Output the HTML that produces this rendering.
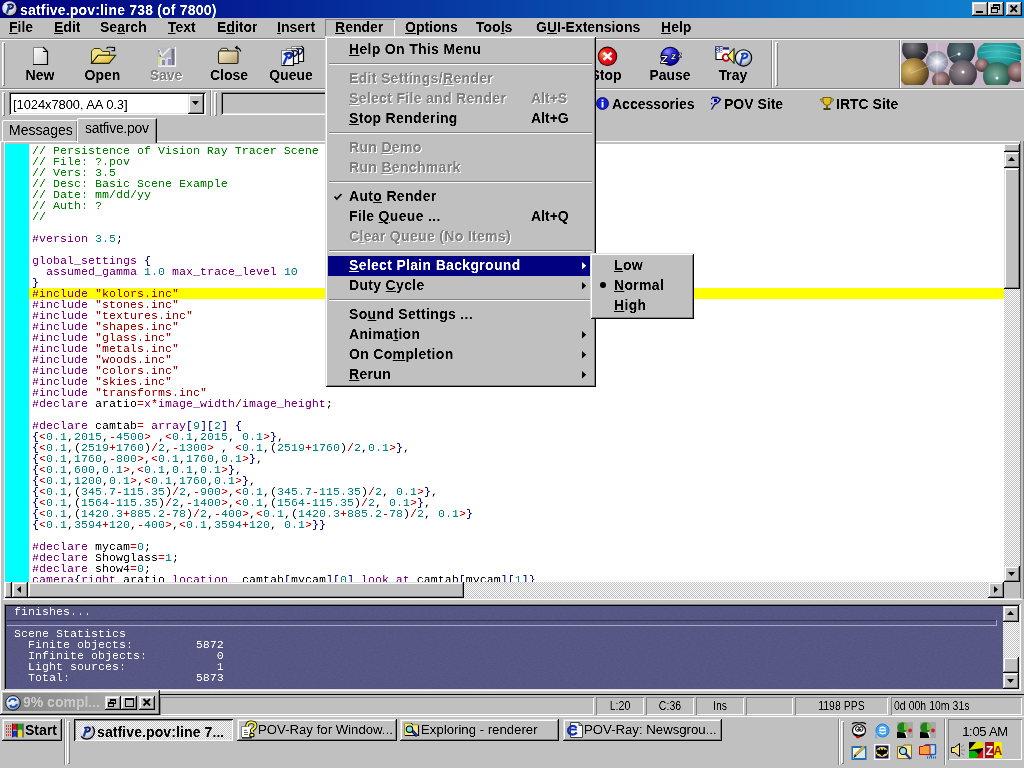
<!DOCTYPE html><html><head><meta charset="utf-8"><style>
*{box-sizing:border-box}
html,body{margin:0;padding:0}
body{width:1024px;height:768px;overflow:hidden;background:#c0c0c0;position:relative;font-family:"Liberation Sans",sans-serif;color:#000}
.a{position:absolute}
.b{font-weight:bold}
.raised{background:#c0c0c0;box-shadow:inset -1px -1px #000,inset 1px 1px #dfdfdf,inset -2px -2px #808080,inset 2px 2px #fff}
.raised2{background:#c0c0c0;box-shadow:inset -1px -1px #000,inset 1px 1px #fff,inset -2px -2px #808080}
.sunk{box-shadow:inset 1px 1px #808080,inset -1px -1px #fff,inset 2px 2px #000,inset -2px -2px #dfdfdf}
.tr{box-shadow:inset -1px -1px #808080,inset 1px 1px #fff}
.ts{box-shadow:inset 1px 1px #808080,inset -1px -1px #fff}
.dither{background-color:#fff;background-image:linear-gradient(45deg,#c0c0c0 25%,transparent 25%,transparent 75%,#c0c0c0 75%),linear-gradient(45deg,#c0c0c0 25%,transparent 25%,transparent 75%,#c0c0c0 75%);background-size:2px 2px;background-position:0 0,1px 1px}
.t{white-space:nowrap;filter:url(#cr)}
.m14b{font-size:14px;font-weight:bold}
.code{font-family:"Liberation Mono",monospace;font-size:11.67px;line-height:11px;white-space:pre;filter:url(#cr)}
u{text-decoration:underline;text-decoration-thickness:1px;text-underline-offset:1px}
</style></head><body>
<svg width="0" height="0" style="position:absolute"><filter id="cr" x="0" y="0" width="100%" height="100%"><feComponentTransfer><feFuncA type="table" tableValues="0 0 .5 1 1"/></feComponentTransfer></filter><filter id="cr2" x="0" y="0" width="100%" height="100%"><feComponentTransfer><feFuncA type="table" tableValues="0 .3 1 1 1"/></feComponentTransfer></filter></svg>
<div class="a " style="left:0px;top:0px;width:1024px;height:18px;background:linear-gradient(90deg,#000080,#1084d0)"></div>
<svg class="a" style="left:1px;top:0px" width="17" height="17" viewBox="0 0 17 17">
<defs><radialGradient id="pb" cx="40%" cy="40%" r="65%"><stop offset="0" stop-color="#ffffff"/><stop offset=".55" stop-color="#dcdce8"/><stop offset="1" stop-color="#a8a8c0"/></radialGradient></defs>
<circle cx="8.5" cy="8.5" r="7.3" fill="url(#pb)"/>
<path d="M3.2 13.5 A7.3 7.3 0 0 0 14.5 3.5" fill="none" stroke="#000" stroke-width="1.3"/>
<path d="M5.8 13.5 L8.3 5.5" stroke="#1040a0" stroke-width="2.3"/>
<path d="M6.3 5 Q11.5 3.5 12 5.8 Q12 8.8 8 8.8" fill="none" stroke="#101850" stroke-width="1.9"/>
<path d="M7.5 6 L9.5 6.5" stroke="#2060e0" stroke-width="1.2"/>
</svg>
<div class="a t b" style="left:20px;top:1px;font-size:14px;line-height:18px;color:#fff;letter-spacing:0.2px">satfive.pov:line 738 (of 7800)</div>
<div class="a raised" style="left:972px;top:2px;width:16px;height:14px;"></div>
<div class="a raised" style="left:988px;top:2px;width:16px;height:14px;"></div>
<div class="a raised" style="left:1006px;top:2px;width:16px;height:14px;"></div>
<div class="a " style="left:976px;top:11px;width:7px;height:2px;background:#000"></div>
<div class="a " style="left:993px;top:4px;width:7px;height:6px;border:1px solid #000;border-top-width:2px;background:#c0c0c0"></div>
<div class="a " style="left:991px;top:7px;width:7px;height:6px;border:1px solid #000;border-top-width:2px;background:#c0c0c0"></div>
<svg class="a" style="left:1009px;top:4px" width="10" height="9"><path d="M1.5 1.5 L8 8 M8 1.5 L1.5 8" stroke="#000" stroke-width="1.8"/></svg>
<div class="a " style="left:0px;top:38px;width:1024px;height:1px;background:#808080"></div>
<div class="a " style="left:0px;top:39px;width:1024px;height:1px;background:#fff"></div>
<div class="a " style="left:325px;top:19px;width:70px;height:18px;box-shadow:inset 1px 1px #808080,inset -1px -1px #fff"></div>
<div class="a t b" style="left:9px;top:18px;font-size:14px;line-height:18px"><u>F</u>ile</div>
<div class="a t b" style="left:54px;top:18px;font-size:14px;line-height:18px"><u>E</u>dit</div>
<div class="a t b" style="left:100px;top:18px;font-size:14px;line-height:18px">Se<u>a</u>rch</div>
<div class="a t b" style="left:168px;top:18px;font-size:14px;line-height:18px"><u>T</u>ext</div>
<div class="a t b" style="left:217px;top:18px;font-size:14px;line-height:18px">E<u>d</u>itor</div>
<div class="a t b" style="left:277px;top:18px;font-size:14px;line-height:18px"><u>I</u>nsert</div>
<div class="a t b" style="left:335px;top:18px;font-size:14px;line-height:18px"><u>R</u>ender</div>
<div class="a t b" style="left:405px;top:18px;font-size:14px;line-height:18px"><u>O</u>ptions</div>
<div class="a t b" style="left:476px;top:18px;font-size:14px;line-height:18px">Too<u>l</u>s</div>
<div class="a t b" style="left:536px;top:18px;font-size:14px;line-height:18px">G<u>U</u>I-Extensions</div>
<div class="a t b" style="left:661px;top:18px;font-size:14px;line-height:18px"><u>H</u>elp</div>
<div class="a " style="left:0px;top:88px;width:1024px;height:1px;background:#808080"></div>
<div class="a " style="left:0px;top:89px;width:1024px;height:1px;background:#fff"></div>
<div class="a " style="left:2px;top:42px;width:3px;height:44px;background:#dfdfdf;box-shadow:inset 1px 1px #fff,inset -1px -1px #808080"></div>
<div class="a " style="left:2px;top:92px;width:3px;height:24px;background:#dfdfdf;box-shadow:inset 1px 1px #fff,inset -1px -1px #808080"></div>
<div class="a " style="left:771px;top:40px;width:1px;height:48px;background:#808080"></div>
<div class="a " style="left:772px;top:40px;width:1px;height:48px;background:#fff"></div>
<div class="a " style="left:775px;top:42px;width:3px;height:44px;background:#dfdfdf;box-shadow:inset 1px 1px #fff,inset -1px -1px #808080"></div>
<div class="a " style="left:899px;top:40px;width:1px;height:48px;background:#808080"></div>
<div class="a " style="left:900px;top:40px;width:1px;height:48px;background:#fff"></div>
<div class="a " style="left:901px;top:43px;width:120px;height:42px;background:#c0c0c0"></div>
<svg class="a" style="left:901px;top:43px" width="120" height="42" viewBox="0 0 120 42">
<defs>
<radialGradient id="m1" cx="40%" cy="40%" r="60%"><stop offset="0" stop-color="#808080"/><stop offset=".6" stop-color="#404048"/><stop offset="1" stop-color="#202028"/></radialGradient>
<radialGradient id="m2" cx="35%" cy="40%" r="65%"><stop offset="0" stop-color="#e0c070"/><stop offset=".6" stop-color="#9a7838"/><stop offset="1" stop-color="#504020"/></radialGradient>
<radialGradient id="m3" cx="45%" cy="45%" r="60%"><stop offset="0" stop-color="#607880"/><stop offset=".7" stop-color="#384850"/><stop offset="1" stop-color="#202830"/></radialGradient>
<radialGradient id="m4" cx="45%" cy="45%" r="60%"><stop offset="0" stop-color="#40c0c0"/><stop offset=".7" stop-color="#209090"/><stop offset="1" stop-color="#105858"/></radialGradient>
<radialGradient id="m5" cx="45%" cy="40%" r="60%"><stop offset="0" stop-color="#c0a0a0"/><stop offset=".6" stop-color="#806060"/><stop offset="1" stop-color="#403030"/></radialGradient>
<radialGradient id="m6" cx="50%" cy="50%" r="55%"><stop offset="0" stop-color="#ffffff"/><stop offset=".4" stop-color="#c8c8d8"/><stop offset="1" stop-color="#707888"/></radialGradient>
<radialGradient id="m7" cx="45%" cy="40%" r="60%"><stop offset="0" stop-color="#a09098"/><stop offset=".6" stop-color="#686068"/><stop offset="1" stop-color="#383038"/></radialGradient>
<radialGradient id="m8" cx="45%" cy="45%" r="60%"><stop offset="0" stop-color="#80b0a0"/><stop offset=".6" stop-color="#407868"/><stop offset="1" stop-color="#204038"/></radialGradient>
</defs>
<rect width="120" height="42" fill="#c8b4c8"/>
<circle cx="14" cy="6" r="13" fill="url(#m1)"/>
<circle cx="13" cy="30" r="15" fill="url(#m2)"/>
<circle cx="60" cy="8" r="14" fill="url(#m3)"/>
<ellipse cx="99" cy="11" rx="23" ry="15" fill="url(#m4)"/>
<path d="M80 4 Q100 0 120 6 M78 10 Q100 5 120 12 M80 16 Q100 11 120 18" stroke="#50d0d0" stroke-width="1" fill="none" opacity=".6"/>
<circle cx="62" cy="31" r="14" fill="url(#m7)"/>
<circle cx="81" cy="22" r="7" fill="url(#m5)"/>
<circle cx="96" cy="33" r="14" fill="url(#m8)"/>
<circle cx="40" cy="37" r="9" fill="url(#m5)"/>
<circle cx="116" cy="29" r="10" fill="url(#m5)"/>
<circle cx="36" cy="19" r="11" fill="url(#m6)"/>
<path d="M36 0 V42 M10 30 L60 10 M20 8 L52 28" stroke="#fff" stroke-width=".6" opacity=".5"/>
<circle cx="58" cy="11" r="1.5" fill="#e0ffff"/><circle cx="62" cy="29" r="1.5" fill="#fff"/><circle cx="96" cy="35" r="1.5" fill="#e0ffff"/>
</svg>
<div class="a t b" style="left:0px;top:67px;width:80px;text-align:center;font-size:14px;line-height:16px">New</div>
<div class="a t b" style="left:62.5px;top:67px;width:80px;text-align:center;font-size:14px;line-height:16px">Open</div>
<div class="a t b" style="left:127px;top:68px;width:80px;text-align:center;font-size:14px;line-height:16px;color:#fff">Save</div>
<div class="a t b" style="left:126px;top:67px;width:80px;text-align:center;font-size:14px;line-height:16px;color:#808080">Save</div>
<div class="a t b" style="left:189px;top:67px;width:80px;text-align:center;font-size:14px;line-height:16px">Close</div>
<div class="a t b" style="left:251px;top:67px;width:80px;text-align:center;font-size:14px;line-height:16px">Queue</div>
<div class="a t b" style="left:566px;top:67px;width:80px;text-align:center;font-size:14px;line-height:16px">Stop</div>
<div class="a t b" style="left:630px;top:67px;width:80px;text-align:center;font-size:14px;line-height:16px">Pause</div>
<div class="a t b" style="left:693px;top:67px;width:80px;text-align:center;font-size:14px;line-height:16px">Tray</div>
<svg class="a" style="left:32px;top:46px" width="18" height="20" viewBox="0 0 18 20">
<defs><linearGradient id="pg" x1="0" y1="0" x2="1" y2="1"><stop offset="0" stop-color="#ffffff"/><stop offset="1" stop-color="#c8c8c8"/></linearGradient></defs>
<path d="M1.5 1.5 H11 L15.5 6 V18.5 H1.5 Z" fill="url(#pg)"/>
<path d="M1.5 18.5 V1.5 H11" fill="none" stroke="#808080" stroke-width="1"/>
<path d="M11 1 L15.5 5.5 V18.5 H1" fill="none" stroke="#000" stroke-width="1.2"/>
<path d="M11 5.5 H15.5" fill="none" stroke="#000" stroke-width="1"/>
</svg>
<svg class="a" style="left:86px;top:40px" width="34" height="26" viewBox="0 0 34 26">
<defs><linearGradient id="fo" x1="0" y1="0" x2="1" y2="1"><stop offset="0" stop-color="#fff8b0"/><stop offset=".6" stop-color="#e8c850"/><stop offset="1" stop-color="#d8a030"/></linearGradient></defs>
<path d="M5.5 23.4 V11 L8 8.5 H14 L16.5 11.5 H23.5 V15.3 H12Z" fill="#f0e088" stroke="#383800" stroke-width="1"/>
<path d="M5.5 23.4 L12 15.3 H29.6 L23 23.4 Z" fill="url(#fo)" stroke="#202000" stroke-width="1.1"/>
<path d="M20.5 8.5 L22 7.2 H25 L28.6 7.6 V10.8 H25.5" fill="none" stroke="#000" stroke-width="1.1"/>
</svg>
<svg class="a" style="left:150px;top:40px" width="36" height="28" viewBox="0 0 36 28">
<rect x="7.5" y="7.5" width="17" height="18" fill="#b8b8c0"/>
<path d="M9 9 L12 16 L20 8" fill="none" stroke="#f0f0f0" stroke-width="1.5"/>
<path d="M9 10 V12 M10 15 L11 17" stroke="#606068" stroke-width="1"/>
<rect x="8" y="17" width="4" height="8" fill="#d8d890"/>
<path d="M11 25 V19 H15 V25 M17 25 V18 H21 V25" fill="none" stroke="#f0f0f0" stroke-width="1"/>
<rect x="12" y="20" width="3" height="5" fill="#8888b0"/><rect x="18" y="19" width="3" height="6" fill="#9090c8"/>
<rect x="21.5" y="9" width="3" height="16" fill="#707088"/>
<path d="M25.5 7 V26.2 H8" fill="none" stroke="#fff" stroke-width="1.2"/>
</svg>
<svg class="a" style="left:212px;top:40px" width="36" height="28" viewBox="0 0 36 28">
<defs><linearGradient id="fc" x1="0" y1="0" x2="1" y2="1"><stop offset="0" stop-color="#f8f0d0"/><stop offset=".5" stop-color="#d8c8a0"/><stop offset="1" stop-color="#a89868"/></linearGradient></defs>
<path d="M8 11 L9.5 8.3 H15 L16.5 11Z" fill="#f0e8c8" stroke="#303018" stroke-width="1"/>
<rect x="6.5" y="11" width="19.5" height="12.5" rx="1.2" fill="url(#fc)" stroke="#202010" stroke-width="1.1"/>
<path d="M25.5 6 L23.5 7.6 L25.5 9.4 M24 7.6 Q27.5 7.6 28.8 11.5" fill="none" stroke="#000" stroke-width="1.1"/>
</svg>
<svg class="a" style="left:276px;top:40px" width="36" height="28" viewBox="0 0 36 28"><rect x="15.5" y="6.5" width="12" height="15" fill="#f4f4f4"/><path d="M15.5 21.5 V6.5 H25.5" fill="none" stroke="#808080" stroke-width="1"/><path d="M25.5 6.0 L27.5 8.0 V21.5 H15.5" fill="none" stroke="#000" stroke-width="1.2"/><path d="M17.5 10.5 Q22.5 7.0 26.5 9.5 Q26.5 13.5 22.5 14.5" fill="none" stroke="#101850" stroke-width="1.4"/><rect x="10.5" y="8.5" width="12" height="15" fill="#f4f4f4"/><path d="M10.5 23.5 V8.5 H20.5" fill="none" stroke="#808080" stroke-width="1"/><path d="M20.5 8.0 L22.5 10.0 V23.5 H10.5" fill="none" stroke="#000" stroke-width="1.2"/><path d="M12.5 12.5 Q17.5 9.0 21.5 11.5 Q21.5 15.5 17.5 16.5" fill="none" stroke="#101850" stroke-width="1.4"/><rect x="5.5" y="10.5" width="12" height="15" fill="#f4f4f4"/><path d="M5.5 25.5 V10.5 H15.5" fill="none" stroke="#808080" stroke-width="1"/><path d="M15.5 10.0 L17.5 12.0 V25.5 H5.5" fill="none" stroke="#000" stroke-width="1.2"/><path d="M7.5 14.5 Q12.5 11.0 16.5 13.5 Q16.5 17.5 12.5 18.5" fill="none" stroke="#101850" stroke-width="1.4"/>
<path d="M7.5 24.5 L11.5 15.5" stroke="#1030c0" stroke-width="2.2"/>
<path d="M9 15.5 Q12 12.5 15 14 Q16 17 12 18.5" fill="none" stroke="#1030c0" stroke-width="2"/>
</svg>
<svg class="a" style="left:597px;top:46px" width="22" height="21" viewBox="0 0 22 21">
<defs><radialGradient id="st" cx="25%" cy="40%" r="75%"><stop offset="0" stop-color="#ff9040"/><stop offset=".35" stop-color="#f02020"/><stop offset="1" stop-color="#d00010"/></radialGradient></defs>
<circle cx="10.5" cy="10.3" r="9.2" fill="url(#st)" stroke="#300000" stroke-width="1.1"/>
<path d="M6.5 6.8 L14.5 13.8 M14.5 6.8 L6.5 13.8" stroke="#fff" stroke-width="2.6"/>
</svg>
<svg class="a" style="left:659px;top:46px" width="26" height="21" viewBox="0 0 26 21">
<defs><radialGradient id="ps" cx="35%" cy="25%" r="75%"><stop offset="0" stop-color="#9090ff"/><stop offset=".4" stop-color="#3030e0"/><stop offset="1" stop-color="#0000a0"/></radialGradient></defs>
<circle cx="11.2" cy="10.3" r="9.1" fill="url(#ps)" stroke="#000040" stroke-width="1.1"/>
<path d="M2 9.5 H9 V11 L4.5 15.5 H9 V17.5 H1.5 V16 L6 11.5 H2Z" fill="#fff" stroke="#000" stroke-width=".9"/>
<path d="M12.5 8 H17 V9 L14.5 12 H17 V13.5 H12 V12.5 L14.5 9.5 H12.5Z" fill="#fff" stroke="#000" stroke-width=".7"/>
<path d="M19.5 7 H22.5 V8 L20.8 10.5 H22.5 V11.5 H19.2 V10.5 L21 8 H19.5Z" fill="#fff" stroke="#000" stroke-width=".6"/>
</svg>
<svg class="a" style="left:710px;top:42px" width="44" height="26" viewBox="0 0 44 26">
<rect x="6" y="7" width="13" height="10.5" fill="#fff"/>
<path d="M6 7 V17.5 H19" fill="none" stroke="#000" stroke-width="1.1"/>
<rect x="5.2" y="4.3" width="7.3" height="6" fill="#101050"/>
<rect x="12.5" y="5.3" width="6.5" height="2.4" fill="#202080"/>
<text x="5.6" y="9.9" font-family="Liberation Sans" font-weight="bold" font-size="6.5" fill="#fff">38</text>
<circle cx="16" cy="15.5" r="3.3" fill="#f0f0f0" stroke="#c00000" stroke-width="1.7"/>
<path d="M17.5 14 L24 6.5 V21.5 Z" fill="#f0f060" stroke="#000" stroke-width="1"/>
<defs><radialGradient id="tp" cx="40%" cy="35%" r="65%"><stop offset="0" stop-color="#ffffff"/><stop offset=".6" stop-color="#d0d8e8"/><stop offset="1" stop-color="#8890a8"/></radialGradient></defs>
<circle cx="33.5" cy="15.9" r="8.2" fill="url(#tp)" stroke="#000" stroke-width="1.1"/>
<path d="M30 23 L33 12.5" stroke="#1040b0" stroke-width="2"/>
<path d="M31 12.2 Q36.5 10.5 37.5 13 Q37 16.5 32.5 16.5" fill="none" stroke="#1040b0" stroke-width="1.9"/>
</svg>
<div class="a " style="left:9px;top:92px;width:197px;height:23px;background:#fff;box-shadow:inset 1px 1px #808080,inset -1px -1px #fff,inset 2px 2px #000,inset -2px -2px #dfdfdf"></div>
<div class="a t " style="left:13px;top:95px;font-size:13px;line-height:19px;letter-spacing:-0.1px">[1024x7800, AA 0.3]</div>
<div class="a raised" style="left:188px;top:94px;width:16px;height:20px;"></div>
<svg class="a" style="left:192px;top:101px" width="8" height="5"><path d="M0 0 H7 L3.5 4Z" fill="#000"/></svg>
<div class="a " style="left:210px;top:90px;width:1px;height:26px;background:#808080"></div>
<div class="a " style="left:211px;top:90px;width:1px;height:26px;background:#fff"></div>
<div class="a " style="left:214px;top:92px;width:3px;height:24px;background:#dfdfdf;box-shadow:inset 1px 1px #fff,inset -1px -1px #808080"></div>
<div class="a " style="left:221px;top:92px;width:110px;height:23px;background:#c0c0c0;box-shadow:inset 1px 1px #808080,inset -1px -1px #fff,inset 2px 2px #000,inset -2px -2px #dfdfdf"></div>
<svg class="a" style="left:596px;top:97px" width="13" height="13" viewBox="0 0 13 13"><circle cx="6.5" cy="6.5" r="6" fill="#1020d0" stroke="#000050" stroke-width=".8"/><rect x="5.5" y="5" width="2" height="5.5" fill="#fff"/><rect x="5.5" y="2.5" width="2" height="1.7" fill="#fff"/></svg>
<div class="a t b" style="left:612px;top:96px;font-size:14px;line-height:17px">Accessories</div>
<svg class="a" style="left:704px;top:92px" width="20" height="20" viewBox="0 0 20 20"><path d="M9 6.5 Q12 10 9.5 12.5 L8 17" fill="none" stroke="#c8c8ff" stroke-width="2"/><rect x="10" y="7" width="3" height="3" fill="#0000c0"/><path d="M8 5.5 H13.5 L16.5 7.5 L14 10.5 L10.5 12.5 L7.5 17.5" fill="none" stroke="#000060" stroke-width="1.3"/><rect x="7" y="6" width="1.3" height="1.3" fill="#000060"/><rect x="7" y="11" width="1.3" height="1.3" fill="#000060"/></svg>
<div class="a t b" style="left:724px;top:96px;font-size:14px;line-height:17px">POV Site</div>
<svg class="a" style="left:819px;top:96px" width="16" height="15" viewBox="0 0 16 15"><path d="M4 1.5 H12 V5 Q12 9 8 9.5 Q4 9 4 5Z" fill="#e0c020" stroke="#604000" stroke-width=".8"/><path d="M4 3 H1.5 Q1.5 6 4.5 6.5 M12 3 H14.5 Q14.5 6 11.5 6.5" fill="none" stroke="#806000" stroke-width=".9"/><rect x="7" y="9.5" width="2" height="2.5" fill="#806000"/><rect x="4.5" y="12" width="7" height="2" fill="#404000"/></svg>
<div class="a t b" style="left:836px;top:96px;font-size:14px;line-height:17px">IRTC Site</div>
<div class="a " style="left:157px;top:141px;width:863px;height:1px;background:#fff"></div>
<div class="a" style="left:2px;top:120px;width:75px;height:21px;background:#c0c0c0;border-top:1px solid #fff;border-left:1px solid #fff;border-top-left-radius:2px;box-shadow:inset -1px 0 #808080"></div>
<div class="a t " style="left:9px;top:122px;font-size:14px;line-height:16px;letter-spacing:0px">Messages</div>
<div class="a" style="left:77px;top:118px;width:80px;height:25px;background:#c0c0c0;border-top:1px solid #fff;border-left:1px solid #fff;border-right:1px solid #000;border-top-left-radius:2px;box-shadow:inset -1px 0 #808080"></div>
<div class="a t " style="left:85px;top:120px;font-size:14px;line-height:16px;letter-spacing:-0.3px">satfive.pov</div>
<div class="a " style="left:2px;top:141px;width:1px;height:1px;background:#fff"></div>
<div class="a " style="left:0px;top:141px;width:77px;height:1px;background:#fff"></div>
<div class="a " style="left:157px;top:141px;width:863px;height:1px;background:#fff"></div>
<div class="a " style="left:0px;top:141px;width:1px;height:550px;background:#fff"></div>
<div class="a " style="left:5px;top:144px;width:999px;height:438px;background:#fff"></div>
<div class="a " style="left:5px;top:144px;width:24px;height:438px;background:#00ffff"></div>
<div class="a " style="left:29px;top:288px;width:975px;height:11px;background:#ffff00"></div>
<div class="a " style="left:1020px;top:141px;width:1px;height:458px;background:#808080"></div>
<div class="a " style="left:1023px;top:141px;width:1px;height:458px;background:#808080"></div>
<div class="a dither" style="left:1004px;top:144px;width:16px;height:438px;"></div>
<div class="a raised2" style="left:1004px;top:144px;width:16px;height:8px;"></div>
<div class="a raised" style="left:1004px;top:152px;width:16px;height:16px;"></div>
<svg class="a" style="left:1008px;top:157px" width="8" height="5"><path d="M3.5 0 L7 4 H0Z" fill="#000"/></svg>
<div class="a raised" style="left:1004px;top:168px;width:16px;height:121px;"></div>
<div class="a raised" style="left:1004px;top:566px;width:16px;height:16px;"></div>
<svg class="a" style="left:1008px;top:572px" width="8" height="5"><path d="M0 0 H7 L3.5 4Z" fill="#000"/></svg>
<div class="a dither" style="left:5px;top:582px;width:999px;height:16px;"></div>
<div class="a raised2" style="left:5px;top:582px;width:7px;height:16px;"></div>
<div class="a raised" style="left:12px;top:582px;width:16px;height:16px;"></div>
<svg class="a" style="left:17px;top:586px" width="5" height="8"><path d="M4 0 V7 L0 3.5Z" fill="#000"/></svg>
<div class="a raised" style="left:28px;top:582px;width:436px;height:16px;"></div>
<div class="a raised" style="left:988px;top:582px;width:16px;height:16px;"></div>
<svg class="a" style="left:994px;top:586px" width="5" height="8"><path d="M0 0 V7 L4 3.5Z" fill="#000"/></svg>
<div class="a " style="left:1004px;top:582px;width:16px;height:16px;background:#c0c0c0"></div>
<div class="a " style="left:4px;top:598px;width:1017px;height:1px;background:#dfdfdf"></div>
<div class="a " style="left:3px;top:599px;width:1019px;height:1px;background:#fff"></div>
<div class="a" style="left:29px;top:144px;width:975px;height:438px;overflow:hidden"><div class="a code" style="left:3px;top:2px"><span style="color:#008000">// Persistence of Vision Ray Tracer Scene</span>
<span style="color:#008000">// File: ?.pov</span>
<span style="color:#008000">// Vers: 3.5</span>
<span style="color:#008000">// Desc: Basic Scene Example</span>
<span style="color:#008000">// Date: mm/dd/yy</span>
<span style="color:#008000">// Auth: ?</span>
<span style="color:#008000">//</span>

<span style="color:#800080">#version</span><span style="color:#000000"> </span><span style="color:#008080">3.5</span><span style="color:#000000">;</span>

<span style="color:#800080">global_settings</span><span style="color:#000000"> </span><span style="color:#000080">{</span>
<span style="color:#000000"> </span><span style="color:#000000"> </span><span style="color:#800080">assumed_gamma</span><span style="color:#000000"> </span><span style="color:#008080">1.0</span><span style="color:#000000"> </span><span style="color:#800080">max_trace_level</span><span style="color:#000000"> </span><span style="color:#008080">10</span>
<span style="color:#000080">}</span>
<span style="color:#800080">#include</span><span style="color:#000000"> </span><span style="color:#a00000">&quot;kolors.inc&quot;</span>
<span style="color:#800080">#include</span><span style="color:#000000"> </span><span style="color:#a00000">&quot;stones.inc&quot;</span>
<span style="color:#800080">#include</span><span style="color:#000000"> </span><span style="color:#a00000">&quot;textures.inc&quot;</span>
<span style="color:#800080">#include</span><span style="color:#000000"> </span><span style="color:#a00000">&quot;shapes.inc&quot;</span>
<span style="color:#800080">#include</span><span style="color:#000000"> </span><span style="color:#a00000">&quot;glass.inc&quot;</span>
<span style="color:#800080">#include</span><span style="color:#000000"> </span><span style="color:#a00000">&quot;metals.inc&quot;</span>
<span style="color:#800080">#include</span><span style="color:#000000"> </span><span style="color:#a00000">&quot;woods.inc&quot;</span>
<span style="color:#800080">#include</span><span style="color:#000000"> </span><span style="color:#a00000">&quot;colors.inc&quot;</span>
<span style="color:#800080">#include</span><span style="color:#000000"> </span><span style="color:#a00000">&quot;skies.inc&quot;</span>
<span style="color:#800080">#include</span><span style="color:#000000"> </span><span style="color:#a00000">&quot;transforms.inc&quot;</span>
<span style="color:#800080">#declare</span><span style="color:#000000"> </span><span style="color:#000000">aratio</span><span style="color:#c00000">=</span><span style="color:#800080">x</span><span style="color:#c00000">*</span><span style="color:#800080">image_width</span><span style="color:#c00000">/</span><span style="color:#800080">image_height</span><span style="color:#000000">;</span>

<span style="color:#800080">#declare</span><span style="color:#000000"> </span><span style="color:#000000">camtab</span><span style="color:#c00000">=</span><span style="color:#000000"> </span><span style="color:#800080">array</span><span style="color:#000080">[</span><span style="color:#008080">9</span><span style="color:#000080">]</span><span style="color:#000080">[</span><span style="color:#008080">2</span><span style="color:#000080">]</span><span style="color:#000000"> </span><span style="color:#000080">{</span>
<span style="color:#000080">{</span><span style="color:#c00000">&lt;</span><span style="color:#008080">0.1</span><span style="color:#000000">,</span><span style="color:#008080">2015</span><span style="color:#000000">,</span><span style="color:#c00000">-</span><span style="color:#008080">4500</span><span style="color:#c00000">&gt;</span><span style="color:#000000"> </span><span style="color:#000000">,</span><span style="color:#c00000">&lt;</span><span style="color:#008080">0.1</span><span style="color:#000000">,</span><span style="color:#008080">2015</span><span style="color:#000000">,</span><span style="color:#000000"> </span><span style="color:#008080">0.1</span><span style="color:#c00000">&gt;</span><span style="color:#000080">}</span><span style="color:#000000">,</span>
<span style="color:#000080">{</span><span style="color:#c00000">&lt;</span><span style="color:#008080">0.1</span><span style="color:#000000">,</span><span style="color:#101010">(</span><span style="color:#008080">2519</span><span style="color:#c00000">+</span><span style="color:#008080">1760</span><span style="color:#101010">)</span><span style="color:#c00000">/</span><span style="color:#008080">2</span><span style="color:#000000">,</span><span style="color:#c00000">-</span><span style="color:#008080">1300</span><span style="color:#c00000">&gt;</span><span style="color:#000000"> </span><span style="color:#000000">,</span><span style="color:#000000"> </span><span style="color:#c00000">&lt;</span><span style="color:#008080">0.1</span><span style="color:#000000">,</span><span style="color:#101010">(</span><span style="color:#008080">2519</span><span style="color:#c00000">+</span><span style="color:#008080">1760</span><span style="color:#101010">)</span><span style="color:#c00000">/</span><span style="color:#008080">2</span><span style="color:#000000">,</span><span style="color:#008080">0.1</span><span style="color:#c00000">&gt;</span><span style="color:#000080">}</span><span style="color:#000000">,</span>
<span style="color:#000080">{</span><span style="color:#c00000">&lt;</span><span style="color:#008080">0.1</span><span style="color:#000000">,</span><span style="color:#008080">1760</span><span style="color:#000000">,</span><span style="color:#c00000">-</span><span style="color:#008080">800</span><span style="color:#c00000">&gt;</span><span style="color:#000000">,</span><span style="color:#c00000">&lt;</span><span style="color:#008080">0.1</span><span style="color:#000000">,</span><span style="color:#008080">1760</span><span style="color:#000000">,</span><span style="color:#008080">0.1</span><span style="color:#c00000">&gt;</span><span style="color:#000080">}</span><span style="color:#000000">,</span>
<span style="color:#000080">{</span><span style="color:#c00000">&lt;</span><span style="color:#008080">0.1</span><span style="color:#000000">,</span><span style="color:#008080">600</span><span style="color:#000000">,</span><span style="color:#008080">0.1</span><span style="color:#c00000">&gt;</span><span style="color:#000000">,</span><span style="color:#c00000">&lt;</span><span style="color:#008080">0.1</span><span style="color:#000000">,</span><span style="color:#008080">0.1</span><span style="color:#000000">,</span><span style="color:#008080">0.1</span><span style="color:#c00000">&gt;</span><span style="color:#000080">}</span><span style="color:#000000">,</span>
<span style="color:#000080">{</span><span style="color:#c00000">&lt;</span><span style="color:#008080">0.1</span><span style="color:#000000">,</span><span style="color:#008080">1200</span><span style="color:#000000">,</span><span style="color:#008080">0.1</span><span style="color:#c00000">&gt;</span><span style="color:#000000">,</span><span style="color:#c00000">&lt;</span><span style="color:#008080">0.1</span><span style="color:#000000">,</span><span style="color:#008080">1760</span><span style="color:#000000">,</span><span style="color:#008080">0.1</span><span style="color:#c00000">&gt;</span><span style="color:#000080">}</span><span style="color:#000000">,</span>
<span style="color:#000080">{</span><span style="color:#c00000">&lt;</span><span style="color:#008080">0.1</span><span style="color:#000000">,</span><span style="color:#101010">(</span><span style="color:#008080">345.7</span><span style="color:#c00000">-</span><span style="color:#008080">115.35</span><span style="color:#101010">)</span><span style="color:#c00000">/</span><span style="color:#008080">2</span><span style="color:#000000">,</span><span style="color:#c00000">-</span><span style="color:#008080">900</span><span style="color:#c00000">&gt;</span><span style="color:#000000">,</span><span style="color:#c00000">&lt;</span><span style="color:#008080">0.1</span><span style="color:#000000">,</span><span style="color:#101010">(</span><span style="color:#008080">345.7</span><span style="color:#c00000">-</span><span style="color:#008080">115.35</span><span style="color:#101010">)</span><span style="color:#c00000">/</span><span style="color:#008080">2</span><span style="color:#000000">,</span><span style="color:#000000"> </span><span style="color:#008080">0.1</span><span style="color:#c00000">&gt;</span><span style="color:#000080">}</span><span style="color:#000000">,</span>
<span style="color:#000080">{</span><span style="color:#c00000">&lt;</span><span style="color:#008080">0.1</span><span style="color:#000000">,</span><span style="color:#101010">(</span><span style="color:#008080">1564</span><span style="color:#c00000">-</span><span style="color:#008080">115.35</span><span style="color:#101010">)</span><span style="color:#c00000">/</span><span style="color:#008080">2</span><span style="color:#000000">,</span><span style="color:#c00000">-</span><span style="color:#008080">1400</span><span style="color:#c00000">&gt;</span><span style="color:#000000">,</span><span style="color:#c00000">&lt;</span><span style="color:#008080">0.1</span><span style="color:#000000">,</span><span style="color:#101010">(</span><span style="color:#008080">1564</span><span style="color:#c00000">-</span><span style="color:#008080">115.35</span><span style="color:#101010">)</span><span style="color:#c00000">/</span><span style="color:#008080">2</span><span style="color:#000000">,</span><span style="color:#000000"> </span><span style="color:#008080">0.1</span><span style="color:#c00000">&gt;</span><span style="color:#000080">}</span><span style="color:#000000">,</span>
<span style="color:#000080">{</span><span style="color:#c00000">&lt;</span><span style="color:#008080">0.1</span><span style="color:#000000">,</span><span style="color:#101010">(</span><span style="color:#008080">1420.3</span><span style="color:#c00000">+</span><span style="color:#008080">885.2</span><span style="color:#c00000">-</span><span style="color:#008080">78</span><span style="color:#101010">)</span><span style="color:#c00000">/</span><span style="color:#008080">2</span><span style="color:#000000">,</span><span style="color:#c00000">-</span><span style="color:#008080">400</span><span style="color:#c00000">&gt;</span><span style="color:#000000">,</span><span style="color:#c00000">&lt;</span><span style="color:#008080">0.1</span><span style="color:#000000">,</span><span style="color:#101010">(</span><span style="color:#008080">1420.3</span><span style="color:#c00000">+</span><span style="color:#008080">885.2</span><span style="color:#c00000">-</span><span style="color:#008080">78</span><span style="color:#101010">)</span><span style="color:#c00000">/</span><span style="color:#008080">2</span><span style="color:#000000">,</span><span style="color:#000000"> </span><span style="color:#008080">0.1</span><span style="color:#c00000">&gt;</span><span style="color:#000080">}</span>
<span style="color:#000080">{</span><span style="color:#c00000">&lt;</span><span style="color:#008080">0.1</span><span style="color:#000000">,</span><span style="color:#008080">3594</span><span style="color:#c00000">+</span><span style="color:#008080">120</span><span style="color:#000000">,</span><span style="color:#c00000">-</span><span style="color:#008080">400</span><span style="color:#c00000">&gt;</span><span style="color:#000000">,</span><span style="color:#c00000">&lt;</span><span style="color:#008080">0.1</span><span style="color:#000000">,</span><span style="color:#008080">3594</span><span style="color:#c00000">+</span><span style="color:#008080">120</span><span style="color:#000000">,</span><span style="color:#000000"> </span><span style="color:#008080">0.1</span><span style="color:#c00000">&gt;</span><span style="color:#000080">}</span><span style="color:#000080">}</span>

<span style="color:#800080">#declare</span><span style="color:#000000"> </span><span style="color:#000000">mycam</span><span style="color:#c00000">=</span><span style="color:#008080">0</span><span style="color:#000000">;</span>
<span style="color:#800080">#declare</span><span style="color:#000000"> </span><span style="color:#000000">Showglass</span><span style="color:#c00000">=</span><span style="color:#008080">1</span><span style="color:#000000">;</span>
<span style="color:#800080">#declare</span><span style="color:#000000"> </span><span style="color:#000000">show4</span><span style="color:#c00000">=</span><span style="color:#008080">0</span><span style="color:#000000">;</span>
<span style="color:#800080">camera</span><span style="color:#000080">{</span><span style="color:#800080">right</span><span style="color:#000000"> </span><span style="color:#000000">aratio</span><span style="color:#000000"> </span><span style="color:#800080">location</span><span style="color:#000000"> </span><span style="color:#000000"> </span><span style="color:#000000">camtab</span><span style="color:#000080">[</span><span style="color:#000000">mycam</span><span style="color:#000080">]</span><span style="color:#000080">[</span><span style="color:#008080">0</span><span style="color:#000080">]</span><span style="color:#000000"> </span><span style="color:#800080">look_at</span><span style="color:#000000"> </span><span style="color:#000000">camtab</span><span style="color:#000080">[</span><span style="color:#000000">mycam</span><span style="color:#000080">]</span><span style="color:#000080">[</span><span style="color:#008080">1</span><span style="color:#000080">]</span><span style="color:#000080">}</span></div></div>
<div class="a " style="left:4px;top:141px;width:1px;height:459px;background:#fff"></div>
<div class="a " style="left:4px;top:599px;width:1016px;height:1px;background:#fff"></div>
<div class="a " style="left:4px;top:604px;width:1016px;height:1px;background:#808080"></div>
<div class="a " style="left:4px;top:604px;width:1px;height:87px;background:#808080"></div>
<div class="a " style="left:5px;top:605px;width:1015px;height:1px;background:#000"></div>
<div class="a " style="left:5px;top:605px;width:1px;height:85px;background:#000"></div>
<div class="a " style="left:5px;top:689px;width:1015px;height:1px;background:#dfdfdf"></div>
<div class="a " style="left:4px;top:690px;width:1017px;height:1px;background:#fff"></div>
<div class="a " style="left:1019px;top:605px;width:1px;height:85px;background:#dfdfdf"></div>
<div class="a " style="left:1020px;top:604px;width:1px;height:87px;background:#fff"></div>
<svg class="a" style="left:6px;top:606px" width="997" height="83">
<filter id="nz" x="0" y="0" width="100%" height="100%"><feTurbulence type="fractalNoise" baseFrequency=".35 .9" numOctaves="2" seed="3"/><feColorMatrix type="matrix" values="0 0 0 0 0  0 0 0 0 0  0 0 0 0 0  0 0 0 .35 0"/></filter>
<rect width="997" height="83" fill="#5c5c8c"/>
<rect width="997" height="83" filter="url(#nz)" opacity=".3"/>
</svg>
<div class="a " style="left:7px;top:620px;width:990px;height:1px;background:#34345a"></div>
<div class="a " style="left:7px;top:625px;width:990px;height:1px;background:#a8a8d0"></div>
<div class="a " style="left:996px;top:620px;width:1px;height:6px;background:#a8a8d0"></div>
<div class="a code" style="left:14px;top:607px;color:#f4f4f4;font-size:11.67px;line-height:11px">finishes...

Scene Statistics
  Finite objects:         5872
  Infinite objects:          0
  Light sources:             1
  Total:                  5873</div>
<div class="a dither" style="left:1003px;top:606px;width:16px;height:83px;"></div>
<div class="a raised" style="left:1003px;top:606px;width:16px;height:16px;"></div>
<svg class="a" style="left:1007px;top:611px" width="8" height="5"><path d="M3.5 0 L7 4 H0Z" fill="#000"/></svg>
<div class="a raised" style="left:1003px;top:657px;width:16px;height:16px;"></div>
<div class="a raised" style="left:1003px;top:673px;width:16px;height:16px;"></div>
<svg class="a" style="left:1007px;top:679px" width="8" height="5"><path d="M0 0 H7 L3.5 4Z" fill="#000"/></svg>
<div class="a " style="left:0px;top:694px;width:1024px;height:1px;background:#000"></div>
<div class="a " style="left:160px;top:697px;width:434px;height:18px;box-shadow:inset 1px 1px #808080,inset -1px -1px #fff"></div>
<div class="a " style="left:596px;top:697px;width:48px;height:18px;box-shadow:inset 1px 1px #808080,inset -1px -1px #fff"></div>
<div class="a t" style="left:596px;top:698px;width:59.25925925925925px;text-align:center;font-size:13px;line-height:16px;transform:scaleX(.81);transform-origin:0 0">L:20</div>
<div class="a " style="left:646px;top:697px;width:48px;height:18px;box-shadow:inset 1px 1px #808080,inset -1px -1px #fff"></div>
<div class="a t" style="left:646px;top:698px;width:59.25925925925925px;text-align:center;font-size:13px;line-height:16px;transform:scaleX(.81);transform-origin:0 0">C:36</div>
<div class="a " style="left:696px;top:697px;width:48px;height:18px;box-shadow:inset 1px 1px #808080,inset -1px -1px #fff"></div>
<div class="a t" style="left:696px;top:698px;width:59.25925925925925px;text-align:center;font-size:13px;line-height:16px;transform:scaleX(.81);transform-origin:0 0">Ins</div>
<div class="a " style="left:746px;top:697px;width:47px;height:18px;box-shadow:inset 1px 1px #808080,inset -1px -1px #fff"></div>
<div class="a " style="left:795px;top:697px;width:93px;height:18px;box-shadow:inset 1px 1px #808080,inset -1px -1px #fff"></div>
<div class="a t" style="left:795px;top:698px;width:114.81481481481481px;text-align:center;font-size:13px;line-height:16px;transform:scaleX(.81);transform-origin:0 0">1198 PPS</div>
<div class="a " style="left:891px;top:697px;width:131px;height:18px;box-shadow:inset 1px 1px #808080,inset -1px -1px #fff"></div>
<div class="a t" style="left:894px;top:698px;font-size:13px;line-height:16px;transform:scaleX(.81);transform-origin:0 0">0d 00h 10m 31s</div>
<div class="a raised" style="left:0px;top:690px;width:160px;height:25px;"></div>
<div class="a " style="left:3px;top:693px;width:154px;height:18px;background:linear-gradient(90deg,#808080,#b8b8b8)"></div>
<svg class="a" style="left:5px;top:695px" width="16" height="16" viewBox="0 0 16 16">
<defs><radialGradient id="rb" cx="40%" cy="35%" r="70%"><stop offset="0" stop-color="#fff"/><stop offset=".6" stop-color="#d0d8e8"/><stop offset="1" stop-color="#506080"/></radialGradient></defs>
<circle cx="8" cy="8" r="7.3" fill="url(#rb)" stroke="#000" stroke-width=".8"/>
<path d="M4 7 Q5 3.5 9 4 L11 5 M12 9 Q11 12.5 7 12 L5 11" fill="none" stroke="#1050c0" stroke-width="1.8"/>
<path d="M10 3 L12 5.5 L9 6.5Z M6 13 L4 10.5 L7 9.5Z" fill="#1050c0"/>
</svg>
<div class="a t b" style="left:23px;top:694px;font-size:14px;line-height:17px;color:#c8c8c8">9% compl...</div>
<div class="a raised" style="left:105px;top:696px;width:16px;height:14px;"></div>
<div class="a raised" style="left:121px;top:696px;width:16px;height:14px;"></div>
<div class="a raised" style="left:139px;top:696px;width:16px;height:14px;"></div>
<div class="a " style="left:110px;top:699px;width:6px;height:5px;border:1px solid #000;border-top-width:2px;background:#c0c0c0"></div>
<div class="a " style="left:108px;top:702px;width:6px;height:5px;border:1px solid #000;border-top-width:2px;background:#c0c0c0"></div>
<div class="a " style="left:125px;top:698px;width:9px;height:9px;border:1px solid #000;border-top-width:2px"></div>
<svg class="a" style="left:142px;top:698px" width="10" height="9"><path d="M1.5 1 L8 7.5 M8 1 L1.5 7.5" stroke="#000" stroke-width="1.8"/></svg>
<div class="a " style="left:0px;top:715px;width:1024px;height:53px;background:#c0c0c0"></div>
<div class="a " style="left:0px;top:716px;width:1024px;height:1px;background:#fff"></div>
<div class="a raised" style="left:2px;top:719px;width:60px;height:22px;"></div>
<svg class="a" style="left:6px;top:723px" width="18" height="15" viewBox="0 0 18 15">
<path d="M7 1 Q9 0 11 1 V7 Q9 6 7 7Z" fill="#e01010"/><path d="M11.5 1 Q14 0 16.5 1 V7 Q14 6 11.5 7Z" fill="#10a010"/>
<path d="M7 8 Q9 7 11 8 V14 Q9 13 7 14Z" fill="#1030e0"/><path d="M11.5 8 Q14 7 16.5 8 V14 Q14 13 11.5 14Z" fill="#f0e010"/>
<path d="M6.5 0.5 V14.5 M11.2 0.5 V14.5 M17 0.5 V14.5" stroke="#000" stroke-width=".8"/>
<path d="M0 3 H5 M0 6 H5 M0 9 H5 M0 12 H5" stroke="#e01010" stroke-width="1.5" stroke-dasharray="1 1"/>
</svg>
<div class="a t b" style="left:25px;top:722px;font-size:14px;line-height:17px">Start</div>
<div class="a " style="left:64px;top:719px;width:1px;height:46px;background:#808080"></div>
<div class="a " style="left:65px;top:719px;width:1px;height:46px;background:#fff"></div>
<div class="a " style="left:67px;top:721px;width:3px;height:43px;background:#dfdfdf;box-shadow:inset 1px 1px #fff,inset -1px -1px #808080"></div>
<div class="a dither" style="left:74px;top:719px;width:159px;height:22px;box-shadow:inset 1px 1px #000,inset -1px -1px #fff,inset 2px 2px #808080,inset -2px -2px #dfdfdf"></div>
<svg class="a" style="left:78px;top:723px" width="17" height="17" viewBox="0 0 17 17">
<defs><radialGradient id="pb2" cx="40%" cy="40%" r="65%"><stop offset="0" stop-color="#ffffff"/><stop offset=".55" stop-color="#dcdce8"/><stop offset="1" stop-color="#a8a8c0"/></radialGradient></defs>
<circle cx="8.5" cy="8.5" r="7.3" fill="url(#pb2)"/>
<path d="M3.2 13.5 A7.3 7.3 0 0 0 14.5 3.5" fill="none" stroke="#000" stroke-width="1.3"/>
<path d="M5.8 13.5 L8.3 5.5" stroke="#1040a0" stroke-width="2.3"/>
<path d="M6.3 5 Q11.5 3.5 12 5.8 Q12 8.8 8 8.8" fill="none" stroke="#101850" stroke-width="1.9"/>
<path d="M7.5 6 L9.5 6.5" stroke="#2060e0" stroke-width="1.2"/>
</svg>
<div class="a t b" style="left:97px;top:724px;font-size:14px;line-height:17px;letter-spacing:.1px">satfive.pov:line 7...</div>
<div class="a raised" style="left:237px;top:719px;width:160px;height:22px;"></div>
<div class="a" style="left:258px;top:719px;width:136px;height:22px;overflow:hidden"><div class="a t" style="left:0;top:3px;font-size:13.2px;line-height:16px">POV-Ray for Window...</div></div>
<div class="a raised" style="left:400px;top:719px;width:159px;height:22px;"></div>
<div class="a" style="left:421px;top:719px;width:135px;height:22px;overflow:hidden"><div class="a t" style="left:0;top:3px;font-size:13.2px;line-height:16px">Exploring - renderer</div></div>
<div class="a raised" style="left:563px;top:719px;width:159px;height:22px;"></div>
<div class="a" style="left:584px;top:719px;width:135px;height:22px;overflow:hidden"><div class="a t" style="left:0;top:3px;font-size:13.2px;line-height:16px">POV-Ray: Newsgrou...</div></div>
<svg class="a" style="left:236px;top:718px" width="24" height="24" viewBox="0 0 24 24">
<rect x="5.5" y="8.5" width="9.5" height="11" fill="#fff"/><path d="M5.5 19.5 V8.5 H11" fill="none" stroke="#808088" stroke-width="1"/><path d="M15 12 V19.8 H6" fill="none" stroke="#000" stroke-width="1.2"/>
<path d="M8 12.3 H11 M8 14.5 H12 M8 16.5 H12" stroke="#505050" stroke-width=".9"/>
<path d="M11 8.5 Q11 4 15.5 4.2 Q19.8 4.5 19.5 8 Q19 10.5 16 12 V14" fill="none" stroke="#000" stroke-width="3.6"/>
<path d="M11 8.5 Q11 4 15.5 4.2 Q19.8 4.5 19.5 8 Q19 10.5 16 12 V14" fill="none" stroke="#f8f040" stroke-width="2"/>
<rect x="13.8" y="15.5" width="4.2" height="3.2" rx="1" fill="#f8f040" stroke="#000" stroke-width="1.1"/>
</svg>
<svg class="a" style="left:400px;top:718px" width="24" height="24" viewBox="0 0 24 24">
<path d="M4.5 17.5 V6 Q4.5 5.3 5.3 5.3 H11 L12.5 6.8 H18.5 V17.5Z" fill="#f4e890" stroke="#a09020" stroke-width="1"/>
<path d="M18.5 7.5 V17.5 H5" fill="none" stroke="#000" stroke-width="1.1"/>
<path d="M11 5 L13 6.8" stroke="#000" stroke-width="1"/>
<path d="M12.5 13 L17 18" stroke="#000060" stroke-width="2.8"/><path d="M12.5 13 L17 18" stroke="#2040c0" stroke-width="1.4"/>
<circle cx="9.5" cy="11.2" r="3.2" fill="#80e0e0" stroke="#000" stroke-width="1.1"/>
</svg>
<svg class="a" style="left:563px;top:718px" width="24" height="24" viewBox="0 0 24 24">
<path d="M7.5 4.5 H16 L19.5 7.5 V19.5 H7.5Z" fill="#f8f8f8" stroke="#404040" stroke-width="1"/>
<path d="M16 4.5 V7.5 H19.5" fill="none" stroke="#404040" stroke-width="1"/>
<path d="M13.5 10 Q12 7.5 9 8 Q5 9.5 5.5 13 Q6.5 17 10.5 16.5 Q12.5 16 13.8 14.5" fill="none" stroke="#1030b0" stroke-width="2.2"/>
<path d="M7 11.5 H13.8" stroke="#1030b0" stroke-width="1.8"/>
<path d="M5 10 Q3.5 14 6 16.5" fill="none" stroke="#103080" stroke-width="1"/>
</svg>
<div class="a " style="left:838px;top:719px;width:1px;height:46px;background:#808080"></div>
<div class="a " style="left:839px;top:719px;width:1px;height:46px;background:#fff"></div>
<div class="a " style="left:841px;top:721px;width:3px;height:43px;background:#dfdfdf;box-shadow:inset 1px 1px #fff,inset -1px -1px #808080"></div>
<div class="a " style="left:944px;top:719px;width:1px;height:46px;background:#808080"></div>
<div class="a " style="left:945px;top:719px;width:1px;height:46px;background:#fff"></div>

<svg class="a" style="left:851px;top:722px" width="16" height="17" viewBox="0 0 16 17"><path d="M1 2 Q4 0 8 1 Q12 0 15 2" stroke="#000" stroke-width="1.2" fill="none"/><ellipse cx="8" cy="8.5" rx="6.5" ry="6" fill="#fff" stroke="#000" stroke-width="1.2"/><ellipse cx="6.5" cy="7" rx="2" ry="2.3" fill="#fff" stroke="#000" stroke-width="1"/><ellipse cx="10" cy="7" rx="2" ry="2.3" fill="#fff" stroke="#000" stroke-width="1"/><circle cx="7" cy="7.5" r=".8" fill="#000"/><circle cx="9.5" cy="7.5" r=".8" fill="#000"/><path d="M3 12 Q8 15 13 12" stroke="#000" stroke-width="1.5" fill="none"/><ellipse cx="7" cy="15" rx="2" ry="1.3" fill="#d00000"/></svg>
<svg class="a" style="left:874px;top:723px" width="16" height="16" viewBox="0 0 16 16"><circle cx="8.5" cy="7.5" r="6.5" fill="#40a0f0"/><circle cx="8.5" cy="7.5" r="6.5" fill="none" stroke="#2080e0" stroke-width="1"/><rect x="5" y="6.5" width="7" height="1.8" fill="#fff"/><path d="M5.5 5.5 Q8.5 3 11.5 5.5" stroke="#fff" stroke-width="1.4" fill="none"/><path d="M5.5 9.5 Q8.5 12 12 9.5" stroke="#fff" stroke-width="1.4" fill="none"/><path d="M3 14.5 Q1 16 2 12 L4 9" stroke="#60b0f0" stroke-width="1.5" fill="none"/></svg>
<svg class="a" style="left:897px;top:722px" width="16" height="16" viewBox="0 0 16 16"><rect width="16" height="16" fill="#a8a8a8"/><path d="M0 16 V10 L4 9 L9 12 V16Z" fill="#000"/><circle cx="5.5" cy="5.5" r="5.2" fill="#208020"/><path d="M7 1 Q12 2 11 8 L7 8Z" fill="#80c040"/><circle cx="13" cy="8.5" r="2" fill="#d02020"/><path d="M8 10 L10 15" stroke="#fff" stroke-width="1.2"/></svg>
<svg class="a" style="left:920px;top:722px" width="16" height="16" viewBox="0 0 16 16"><rect width="16" height="16" fill="#a8a8a8"/><path d="M0 16 V10 L4 9 L9 12 V16Z" fill="#000"/><circle cx="5.5" cy="5.5" r="5.2" fill="#208020"/><path d="M7 1 Q12 2 11 8 L7 8Z" fill="#80c040"/><circle cx="13" cy="8.5" r="2" fill="#d02020"/><path d="M8 10 L10 15" stroke="#fff" stroke-width="1.2"/></svg>
<svg class="a" style="left:851px;top:744px" width="16" height="16" viewBox="0 0 16 16"><rect x="0.5" y="2" width="15" height="14" fill="#2070b0"/><path d="M2 15 L14 4 V14 H2Z" fill="#e0e8e8"/><path d="M2 4 H13 L2 14Z" fill="#f8f8f8"/><path d="M3 12 L13 2" stroke="#e0a020" stroke-width="2.2"/><path d="M2.5 13.5 L4 10.5 L5.5 12Z" fill="#000"/></svg>
<svg class="a" style="left:874px;top:744px" width="16" height="16" viewBox="0 0 16 16"><rect width="16" height="16" fill="#fff"/><rect x="1.5" y="1.5" width="13" height="13" fill="#101060"/><ellipse cx="8" cy="8" rx="6.2" ry="5" fill="#f0e040"/><path d="M2 7 Q4 4.5 5.5 6.5 L6.5 4 L7.5 6 H8.5 L9.5 4 L10.5 6.5 Q12 4.5 14 7 Q12.5 8 12.5 10 Q10 9 8 12.5 Q6 9 3.5 10 Q3.5 8 2 7Z" fill="#000"/></svg>
<svg class="a" style="left:897px;top:744px" width="16" height="17" viewBox="0 0 16 17"><path d="M0.5 2.5 H6 L7 1 H14.5 V14.5 H0.5Z" fill="#f8e8a0" stroke="#807020"/><circle cx="6" cy="7" r="3.5" fill="#a0e0f0" stroke="#000" stroke-width="1.1"/><path d="M8.5 9.5 L13.5 15" stroke="#1030c0" stroke-width="2.2"/></svg>
<svg class="a" style="left:919px;top:744px" width="18" height="16" viewBox="0 0 18 16"><rect x="6.5" y="0.5" width="10" height="10" rx="1" fill="#c0e0f0" stroke="#1060c0" stroke-width="1.4"/><path d="M0.5 2.5 H4 L5 1.5 H11 V10.5 H0.5Z" fill="#f0a040" stroke="#d00000"/><path d="M8 13.5 H17" stroke="#1060c0" stroke-width="2" stroke-dasharray="1 1"/><path d="M12 10.5 V13" stroke="#1060c0" stroke-width="1.5"/></svg>

<div class="a " style="left:948px;top:719px;width:74px;height:41px;box-shadow:inset 1px 1px #808080,inset -1px -1px #fff"></div>
<div class="a t " style="left:948px;top:723px;width:74px;text-align:center;font-size:13px;line-height:17px;letter-spacing:-.3px">1:05 AM</div>
<svg class="a" style="left:950px;top:742px" width="18" height="16" viewBox="0 0 18 16"><path d="M1.5 5.5 H4.5 L9.5 1.5 V14.5 L4.5 10.5 H1.5Z" fill="#f0e080" stroke="#000"/><path d="M11 5 L14 3 M11 8 H15 M11 11 L14 13" stroke="#808080" stroke-width="1"/></svg>
<svg class="a" style="left:969px;top:742px" width="14" height="16" viewBox="0 0 14 16"><rect width="14" height="16" fill="#000"/><path d="M0 8 L7 0 H14 V6 Z" fill="#e0e000"/><path d="M0 16 V9 L6 9 L14 16Z" fill="#00b000"/><path d="M14 7 V16 H7Z" fill="#e01010"/></svg>
<svg class="a" style="left:985px;top:742px" width="17" height="16" viewBox="0 0 17 16"><rect width="17" height="16" fill="#f0f000"/><rect x="0" y="0" width="9" height="16" fill="#a01010"/><text x="1" y="13" font-family="Liberation Sans" font-weight="bold" font-size="12" fill="#fff">Z</text><text x="8.5" y="13" font-family="Liberation Sans" font-weight="bold" font-size="12" fill="#a01010">A</text></svg>
<div class="a " style="left:325px;top:36px;width:271px;height:351px;box-shadow:inset 1px 1px #dfdfdf,inset -1px -1px #000,inset 2px 2px #fff,inset -2px -2px #808080;background:#c0c0c0"></div>
<div class="a t b" style="left:349px;top:41px;font-size:14px;line-height:16px;letter-spacing:.32px;color:#000"><u>H</u>elp On This Menu</div>
<div class="a " style="left:329px;top:63px;width:263px;height:1px;background:#808080"></div>
<div class="a " style="left:329px;top:64px;width:263px;height:1px;background:#fff"></div>
<div class="a t b" style="left:350px;top:71px;font-size:14px;line-height:16px;letter-spacing:.32px;color:#fff">Edit Settings/<u>R</u>ender</div><div class="a t b" style="left:349px;top:70px;font-size:14px;line-height:16px;letter-spacing:.32px;color:#808080">Edit Settings/<u>R</u>ender</div>
<div class="a t b" style="left:350px;top:91px;font-size:14px;line-height:16px;letter-spacing:.32px;color:#fff"><u>S</u>elect File and Render</div><div class="a t b" style="left:349px;top:90px;font-size:14px;line-height:16px;letter-spacing:.32px;color:#808080"><u>S</u>elect File and Render</div><div class="a t b" style="left:532px;top:91px;font-size:14px;line-height:16px;color:#fff">Alt+S</div><div class="a t b" style="left:531px;top:90px;font-size:14px;line-height:16px;color:#808080">Alt+S</div>
<div class="a t b" style="left:349px;top:110px;font-size:14px;line-height:16px;letter-spacing:.32px;color:#000"><u>S</u>top Rendering</div><div class="a t b" style="left:531px;top:110px;font-size:14px;line-height:16px;color:#000">Alt+G</div>
<div class="a " style="left:329px;top:132px;width:263px;height:1px;background:#808080"></div>
<div class="a " style="left:329px;top:133px;width:263px;height:1px;background:#fff"></div>
<div class="a t b" style="left:350px;top:140px;font-size:14px;line-height:16px;letter-spacing:.32px;color:#fff">Run <u>D</u>emo</div><div class="a t b" style="left:349px;top:139px;font-size:14px;line-height:16px;letter-spacing:.32px;color:#808080">Run <u>D</u>emo</div>
<div class="a t b" style="left:350px;top:160px;font-size:14px;line-height:16px;letter-spacing:.32px;color:#fff">Run <u>B</u>enchmark</div><div class="a t b" style="left:349px;top:159px;font-size:14px;line-height:16px;letter-spacing:.32px;color:#808080">Run <u>B</u>enchmark</div>
<div class="a " style="left:329px;top:181px;width:263px;height:1px;background:#808080"></div>
<div class="a " style="left:329px;top:182px;width:263px;height:1px;background:#fff"></div>
<div class="a t b" style="left:349px;top:188px;font-size:14px;line-height:16px;letter-spacing:.32px;color:#000">Aut<u>o</u> Render</div><svg class="a" style="left:334px;top:193px" width="8" height="8"><path d="M0.5 3.5 L2.8 6 L7.5 1" fill="none" stroke="#000" stroke-width="1.8"/></svg>
<div class="a t b" style="left:349px;top:208px;font-size:14px;line-height:16px;letter-spacing:.32px;color:#000">File <u>Q</u>ueue ...</div><div class="a t b" style="left:531px;top:208px;font-size:14px;line-height:16px;color:#000">Alt+Q</div>
<div class="a t b" style="left:350px;top:229px;font-size:14px;line-height:16px;letter-spacing:.32px;color:#fff">C<u>l</u>ear Queue (No Items)</div><div class="a t b" style="left:349px;top:228px;font-size:14px;line-height:16px;letter-spacing:.32px;color:#808080">C<u>l</u>ear Queue (No Items)</div>
<div class="a " style="left:329px;top:250px;width:263px;height:1px;background:#808080"></div>
<div class="a " style="left:329px;top:251px;width:263px;height:1px;background:#fff"></div>
<div class="a " style="left:328px;top:256px;width:262px;height:20px;background:#000080"></div><div class="a t b" style="left:349px;top:257px;font-size:14px;line-height:16px;letter-spacing:.32px;color:#fff"><u>S</u>elect Plain Background</div><svg class="a" style="left:582px;top:262px" width="5" height="8"><path d="M0 0 V7.5 L4.2 3.75Z" fill="#fff"/></svg>
<div class="a t b" style="left:349px;top:277px;font-size:14px;line-height:16px;letter-spacing:.32px;color:#000">Duty <u>C</u>ycle</div><svg class="a" style="left:582px;top:282px" width="5" height="8"><path d="M0 0 V7.5 L4.2 3.75Z" fill="#000"/></svg>
<div class="a " style="left:329px;top:299px;width:263px;height:1px;background:#808080"></div>
<div class="a " style="left:329px;top:300px;width:263px;height:1px;background:#fff"></div>
<div class="a t b" style="left:349px;top:306px;font-size:14px;line-height:16px;letter-spacing:.32px;color:#000">So<u>u</u>nd Settings ...</div>
<div class="a t b" style="left:349px;top:326px;font-size:14px;line-height:16px;letter-spacing:.32px;color:#000">Anima<u>t</u>ion</div><svg class="a" style="left:582px;top:331px" width="5" height="8"><path d="M0 0 V7.5 L4.2 3.75Z" fill="#000"/></svg>
<div class="a t b" style="left:349px;top:346px;font-size:14px;line-height:16px;letter-spacing:.32px;color:#000">On Co<u>m</u>pletion</div><svg class="a" style="left:582px;top:351px" width="5" height="8"><path d="M0 0 V7.5 L4.2 3.75Z" fill="#000"/></svg>
<div class="a t b" style="left:349px;top:366px;font-size:14px;line-height:16px;letter-spacing:.32px;color:#000"><u>R</u>erun</div><svg class="a" style="left:582px;top:371px" width="5" height="8"><path d="M0 0 V7.5 L4.2 3.75Z" fill="#000"/></svg>
<div class="a " style="left:590px;top:253px;width:104px;height:66px;box-shadow:inset 1px 1px #dfdfdf,inset -1px -1px #000,inset 2px 2px #fff,inset -2px -2px #808080;background:#c0c0c0"></div>
<div class="a t b" style="left:614px;top:257px;font-size:14px;line-height:16px;letter-spacing:.32px"><u>L</u>ow</div>
<div class="a t b" style="left:614px;top:277px;font-size:14px;line-height:16px;letter-spacing:.32px"><u>N</u>ormal</div>
<div class="a t b" style="left:614px;top:297px;font-size:14px;line-height:16px;letter-spacing:.32px"><u>H</u>igh</div>
<div class="a" style="left:600px;top:282px;width:6px;height:6px;border-radius:50%;background:#000"></div>
</body></html>
